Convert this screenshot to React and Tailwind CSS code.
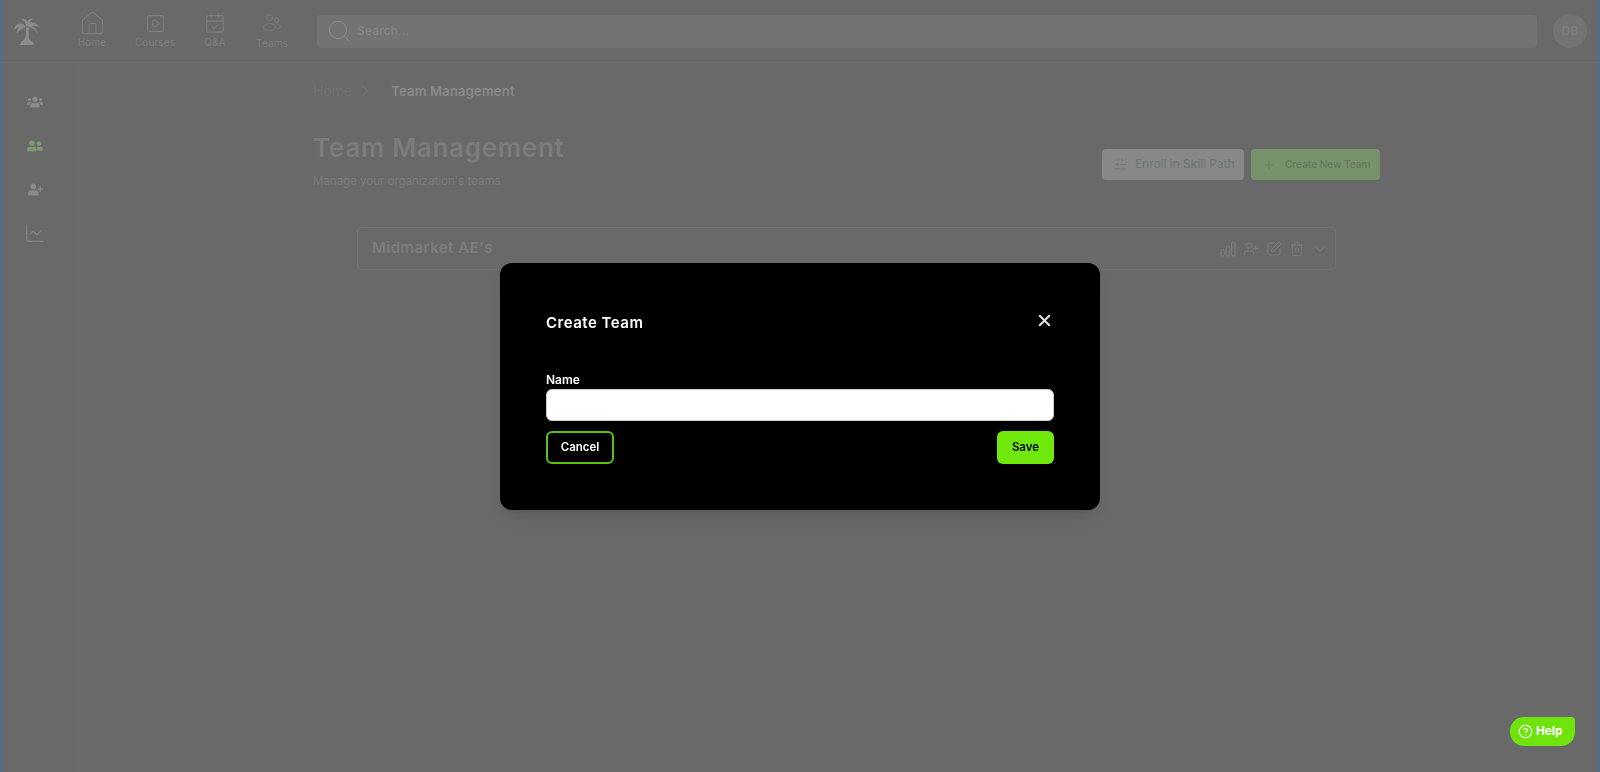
import { House, SquarePlay, CalendarCheck, Search, ChevronRight, SlidersHorizontal, Plus, UserPlus, SquarePen, Trash2, ChevronDown, X, CircleHelp, ChartLine } from "lucide-react";
import { FaUsers, FaUserFriends, FaUserPlus } from "react-icons/fa";

const PalmLogo = ({ className }) => (
  <svg viewBox="0 0 26 27" fill="currentColor" className={className}>
    <path d="M12 9C10 5.500 6 4.500 3 6.500 1.500 7.500.6 9.500 0 12.500c2-2 3.500-3 5.500-3.200C3.800 10.800 2.800 13 3 15.500 5 12.500 8 10.500 12 9z" />
    <path d="M12.500 8.500C11.500 5 10.500 2.500 7 1.500c2.500-.9 5-.5 6.500 2 1-2 3-3.300 6.500-3-2 .7-3.800 2-4.500 4 3.500-1 7.500.5 10 5-3-1.700-5.500-2-8-1.600 3 1 5.500 3.500 6.500 8-2.500-4-6-6.500-11.500-7.900z" />
    <path d="M12 9.500h3c-.6 4-.7 8 .3 12.500H10.500c1.200-4 1.800-8 1.500-12.500z" />
    <path d="M6 27c.6-3.500 3.500-5.500 7-5.500s6.400 2 7 5.500H6z" />
  </svg>
);

const TeamsIcon = ({ className }) => (
  <svg viewBox="0 0 18 18" fill="none" stroke="currentColor" strokeWidth="1" className={className}>
    <circle cx="6.500" cy="3.600" r="3" />
    <circle cx="13.700" cy="6" r="2.200" />
    <path d="M.6 13.800c0-2.500 2.700-4.300 6-4.300s6 1.800 6 4.300c0 1.500-2.700 2.600-6 2.600s-6-1.100-6-2.600z" />
    <path d="M12.800 10c2.500-.2 4.600.8 4.600 2.600 0 1.300-1.700 2-4.400 2" />
  </svg>
);

const BarsIcon = ({ className }) => (
  <svg viewBox="0 0 16 16" fill="none" stroke="currentColor" strokeWidth="1" className={className}>
    <rect x="1" y="9" width="3.400" height="6" rx="1.400" />
    <rect x="6.300" y="5.500" width="3.400" height="9.500" rx="1.400" />
    <rect x="11.600" y="1" width="3.400" height="14" rx="1.400" />
  </svg>
);

const NavItem = ({ icon: Icon, label, className, iconClass, iconBox, strokeWidth, labelClass }) => (
  <div className={`flex w-[40px] flex-col items-center ${className || ""}`}>
    <div className={`flex h-[22px] items-center justify-center ${iconBox || ""}`}>
      <Icon className={iconClass} strokeWidth={strokeWidth} />
    </div>
    <span className={`mt-[1px] whitespace-nowrap text-[10px] leading-[14px] tracking-[0.1px] ${labelClass || ""}`}>{label}</span>
  </div>
);

const TopBar = () => (
  <header className="flex h-[63px] shrink-0 items-center border-b border-[#6e6e6e] pl-[13px] pr-[12px]">
    <PalmLogo className="h-[27px] w-[26px] shrink-0 text-[#8c8c8c]" />
    <nav className="ml-[32px] flex text-[#7e7e7e]">
      <NavItem icon={House} label="Home" iconClass="h-[27px] w-[27px]" strokeWidth={0.9} />
      <NavItem icon={SquarePlay} label="Courses" className="ml-[23px]" iconClass="h-[21px] w-[21px]" strokeWidth={1.2} />
      <NavItem icon={CalendarCheck} label="Q&A" className="ml-[20px]" iconClass="h-[22px] w-[22px]" strokeWidth={1.2} />
      <NavItem icon={TeamsIcon} label="Teams" className="ml-[17px]" iconClass="h-[18px] w-[18px]" labelClass="mt-[2px]" />
    </nav>
    <div className="ml-[25px] flex h-[33px] flex-1 items-center rounded-[4px] bg-[#737373] pl-[9px]">
      <Search className="h-[26px] w-[26px] text-[#8a8a8a]" strokeWidth={0.9} />
      <span className="ml-[5px] text-[12px] tracking-[0.2px] text-[#888888]">Search...</span>
    </div>
    <div className="ml-[16px] flex h-[34px] w-[34px] items-center justify-center rounded-full bg-[#737373] text-[12px] font-medium text-[#7f7f7f]">
      DB
    </div>
  </header>
);

const SideBar = () => (
  <aside className="flex w-[79px] shrink-0 flex-col items-center border-r border-[#6c6c6c] pt-[31px] pr-[10px] text-[#8a8a8a]">
    <FaUsers className="h-[16px] w-[16px]" />
    <FaUserFriends className="mt-[28px] h-[16px] w-[16px] text-[#7f9a72]" />
    <FaUserPlus className="mt-[28px] h-[15px] w-[15px]" />
    <ChartLine className="mt-[25px] h-[22px] w-[22px] text-[#8a8a8a]" strokeWidth={1.1} />
  </aside>
);

const Main = () => (
  <main className="flex-1 pl-[233px] pr-[219px]">
    <div className="mt-[18px] flex items-center leading-[16px]">
      <span className="text-[14px] text-[#727272]">Home</span>
      <ChevronRight className="ml-[3px] h-[20px] w-[20px] text-[#7c7c7c]" strokeWidth={1} />
      <span className="ml-[16px] text-[13px] font-semibold tracking-[0.2px] text-[#8a8a8a]">Team Management</span>
    </div>
    <div className="mt-[27px] flex items-start justify-between">
      <div>
        <h1 className="text-[26px] font-semibold leading-[40px] tracking-[0.7px] text-[#7c7c7c]">Team Management</h1>
        <p className="mt-[5px] text-[11.500px] leading-[16px] text-[#7b7b7b]">Manage your organization's teams</p>
      </div>
      <div className="mt-[21px] flex gap-[7px]">
        <button className="flex h-[31px] w-[142px] items-center whitespace-nowrap rounded-[4px] bg-[#888888] pl-[11px] text-[11.800px] font-medium text-[#6f7a6f]">
          <SlidersHorizontal className="h-[15px] w-[15px]" strokeWidth={1.2} />
          <span className="ml-[7px]">Enroll in Skill Path</span>
        </button>
        <button className="flex h-[31px] w-[129px] items-center whitespace-nowrap rounded-[4px] bg-[#76936b] pl-[11px] text-[10px] font-semibold text-[#667a60]">
          <Plus className="h-[14px] w-[14px]" strokeWidth={1.2} />
          <span className="ml-[9px]">Create New Team</span>
        </button>
      </div>
    </div>
    <div className="ml-[44px] mt-[38px] flex h-[43px] w-[979px] items-center rounded-[4px] border border-[#727272] pl-[14px] pr-[7px]">
      <span className="text-[15px] font-semibold tracking-[0.45px] text-[#7d7d7d]">Midmarket AE's</span>
      <div className="ml-auto flex items-center gap-[7px] text-[#808080]">
        <BarsIcon className="h-[16px] w-[16px]" />
        <UserPlus className="h-[16px] w-[16px]" strokeWidth={1.2} />
        <SquarePen className="h-[16px] w-[16px]" strokeWidth={1.2} />
        <Trash2 className="h-[16px] w-[16px]" strokeWidth={1.2} />
        <ChevronDown className="h-[16px] w-[16px]" strokeWidth={1.2} />
      </div>
    </div>
  </main>
);

const CreateTeamModal = () => (
  <div className="fixed inset-0 flex justify-center pt-[263px]">
    <div className="h-[247px] w-[600px] rounded-[12px] bg-black px-[46px] pt-[46px] shadow-lg">
      <div className="flex h-[24px] items-center justify-between">
        <h2 className="mt-[4px] text-[15px] font-semibold tracking-[0.5px] text-white">Create Team</h2>
        <X className="-mt-[2px] h-[19px] w-[19px] text-[#e0e0e0]" strokeWidth={2.6} />
      </div>
      <label className="mt-[38px] block pb-[1px] text-[12px] font-semibold leading-[17px] text-white">Name</label>
      <div className="h-[32px] w-full rounded-[6px] border border-[#cccccc] bg-white" />
      <div className="mt-[10px] flex justify-between">
        <button className="h-[33px] w-[68px] rounded-[6px] border-2 border-[#58c40b] pt-[1px] text-[11.500px] font-semibold text-white">Cancel</button>
        <button className="h-[33px] w-[57px] rounded-[6px] bg-[#6fe80c] pt-[1px] text-[11.500px] font-semibold text-black">Save</button>
      </div>
    </div>
  </div>
);

const HelpButton = () => (
  <button className="fixed bottom-[26px] right-[25px] flex h-[29px] w-[65px] items-center rounded-[14px] rounded-tr-[4px] bg-[#6fe40c] pl-[8px] text-[11.800px] font-bold text-white">
    <CircleHelp className="h-[15px] w-[15px]" strokeWidth={1.8} />
    <span className="ml-[3px]">Help</span>
  </button>
);

export default function App() {
  return (
    <div className="flex h-screen w-full flex-col overflow-hidden border-x border-x-[#2f74d0] bg-[#696969] font-['Inter',sans-serif]">
      <TopBar />
      <div className="flex flex-1">
        <SideBar />
        <Main />
      </div>
      <CreateTeamModal />
      <HelpButton />
    </div>
  );
}
